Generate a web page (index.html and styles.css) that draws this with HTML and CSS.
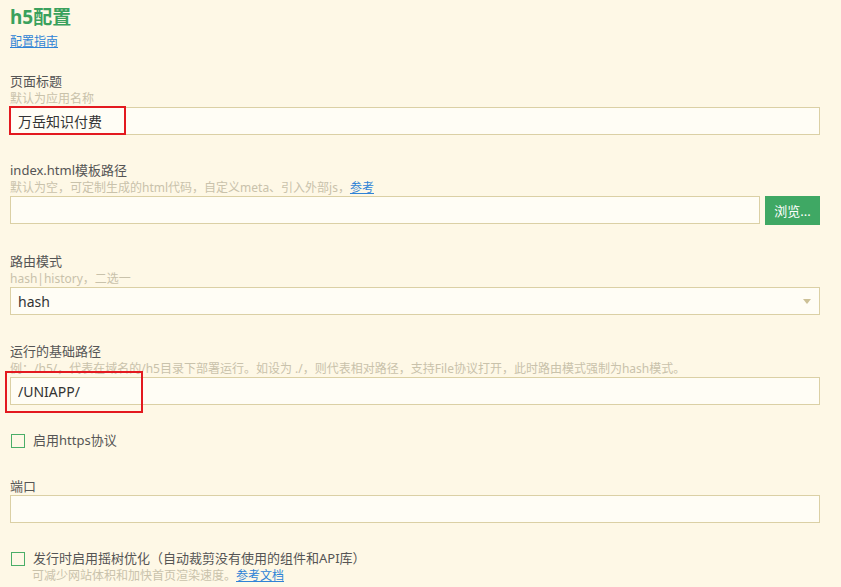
FILE: index.html
```html
<!DOCTYPE html>
<html lang="zh-CN">
<head>
    <meta charset="UTF-8">
    <meta name="viewport" content="width=device-width, initial-scale=1.0">
    <title>h5配置</title>
    <link rel="stylesheet" href="styles.css">
</head>
<body>
    <div class="page">
        <h1 class="title">h5配置</h1>
        <a class="link" href="#">配置指南</a>

        <div class="field first">
            <div class="label">页面标题</div>
            <div class="hint">默认为应用名称</div>
            <div class="mark-wrap">
                <input class="input" type="text" value="万岳知识付费">
                <div class="mark mark-title"></div>
            </div>
        </div>

        <div class="field">
            <div class="label">index.html模板路径</div>
            <div class="hint">默认为空，可定制生成的html代码，自定义meta、引入外部js，<a class="link" href="#">参考</a></div>
            <div class="row">
                <input class="input" type="text" value="">
                <button class="browse">浏览...</button>
            </div>
        </div>

        <div class="field route">
            <div class="label">路由模式</div>
            <div class="hint">hash|history，二选一</div>
            <div class="select">
                <span>hash</span>
                <span class="arrow"></span>
            </div>
        </div>

        <div class="field base">
            <div class="label">运行的基础路径</div>
            <div class="hint">例：/h5/，代表在域名的/h5目录下部署运行。如设为 ./，则代表相对路径，支持File协议打开，此时路由模式强制为hash模式。</div>
            <div class="mark-wrap">
                <input class="input" type="text" value="/UNIAPP/">
                <div class="mark mark-base"></div>
            </div>
        </div>

        <label class="check">
            <span class="box"></span>
            <span>启用https协议</span>
        </label>

        <div class="field port">
            <div class="label">端口</div>
            <input class="input" type="text" value="">
        </div>

        <label class="check last">
            <span class="box"></span>
            <span>发行时启用摇树优化（自动裁剪没有使用的组件和API库）</span>
        </label>
        <div class="hint indent">可减少网站体积和加快首页渲染速度。<a class="link" href="#">参考文档</a></div>
    </div>
</body>
</html>
```

FILE: styles.css
```css
html, body {
    margin: 0;
    background-color: #fef8e6;
}
body {
    font-family: "Noto Sans", "Noto Sans CJK SC", sans-serif;
    color: #555;
}
.page {
    width: 810px;
    padding: 5px 0 0 10px;
}
.title {
    margin: 0;
    font-size: 19px;
    line-height: 24px;
    font-weight: bold;
    color: #3aa15d;
}
.link {
    display: inline-block;
    font-size: 12px;
    line-height: 17px;
    color: #2f83d6;
    text-decoration: underline;
}
.page > .link {
    margin-top: 2px;
}
.field {
    margin-top: 27px;
}
.field.first {
    margin-top: 22px;
}
.field.route,
.field.base {
    margin-top: 28px;
}
.label {
    font-size: 13px;
    line-height: 17px;
    color: #555;
}
.hint {
    font-size: 12px;
    line-height: 17px;
    color: #c9c2ab;
    white-space: nowrap;
}
.hint .link {
    line-height: 17px;
}
.input {
    display: block;
    box-sizing: border-box;
    width: 100%;
    height: 28px;
    margin: 0;
    padding: 0 7px;
    border: 1px solid #dbd0a5;
    background-color: #fffdf5;
    font-family: "Noto Sans", "Noto Sans CJK SC", sans-serif;
    font-size: 14px;
    color: #333;
    outline: none;
}
.row {
    display: flex;
    gap: 5px;
}
.row .input {
    flex: 1;
}
.browse {
    width: 55px;
    height: 29px;
    border: none;
    background-color: #3fa864;
    color: #fff;
    font-family: "Noto Sans", "Noto Sans CJK SC", sans-serif;
    font-size: 13px;
    padding: 0;
}
.select {
    display: flex;
    justify-content: space-between;
    align-items: center;
    box-sizing: border-box;
    height: 28px;
    padding: 0 8px 0 7px;
    border: 1px solid #dbd0a5;
    background-color: #fffdf5;
    font-size: 14px;
    color: #333;
}
.arrow {
    width: 0;
    height: 0;
    border-left: 4px solid transparent;
    border-right: 4px solid transparent;
    border-top: 5px solid #cdc197;
}
.mark-wrap {
    position: relative;
}
.mark {
    position: absolute;
    border: 2px solid #e3191f;
}
.mark-title {
    left: -1px;
    top: -1px;
    width: 113px;
    height: 25px;
}
.mark-base {
    left: -5px;
    top: -6px;
    width: 134px;
    height: 38px;
}
.check {
    display: flex;
    align-items: center;
    gap: 8px;
    margin-top: 27px;
    font-size: 13px;
    line-height: 17px;
    color: #555;
}
.box {
    width: 12px;
    height: 12px;
    margin-left: 1px;
    border: 1px solid #4aae68;
}
.field.port {
    margin-top: 29px;
}
.check.last {
    margin-top: 27px;
}
.indent {
    padding-left: 22px;
}
```
